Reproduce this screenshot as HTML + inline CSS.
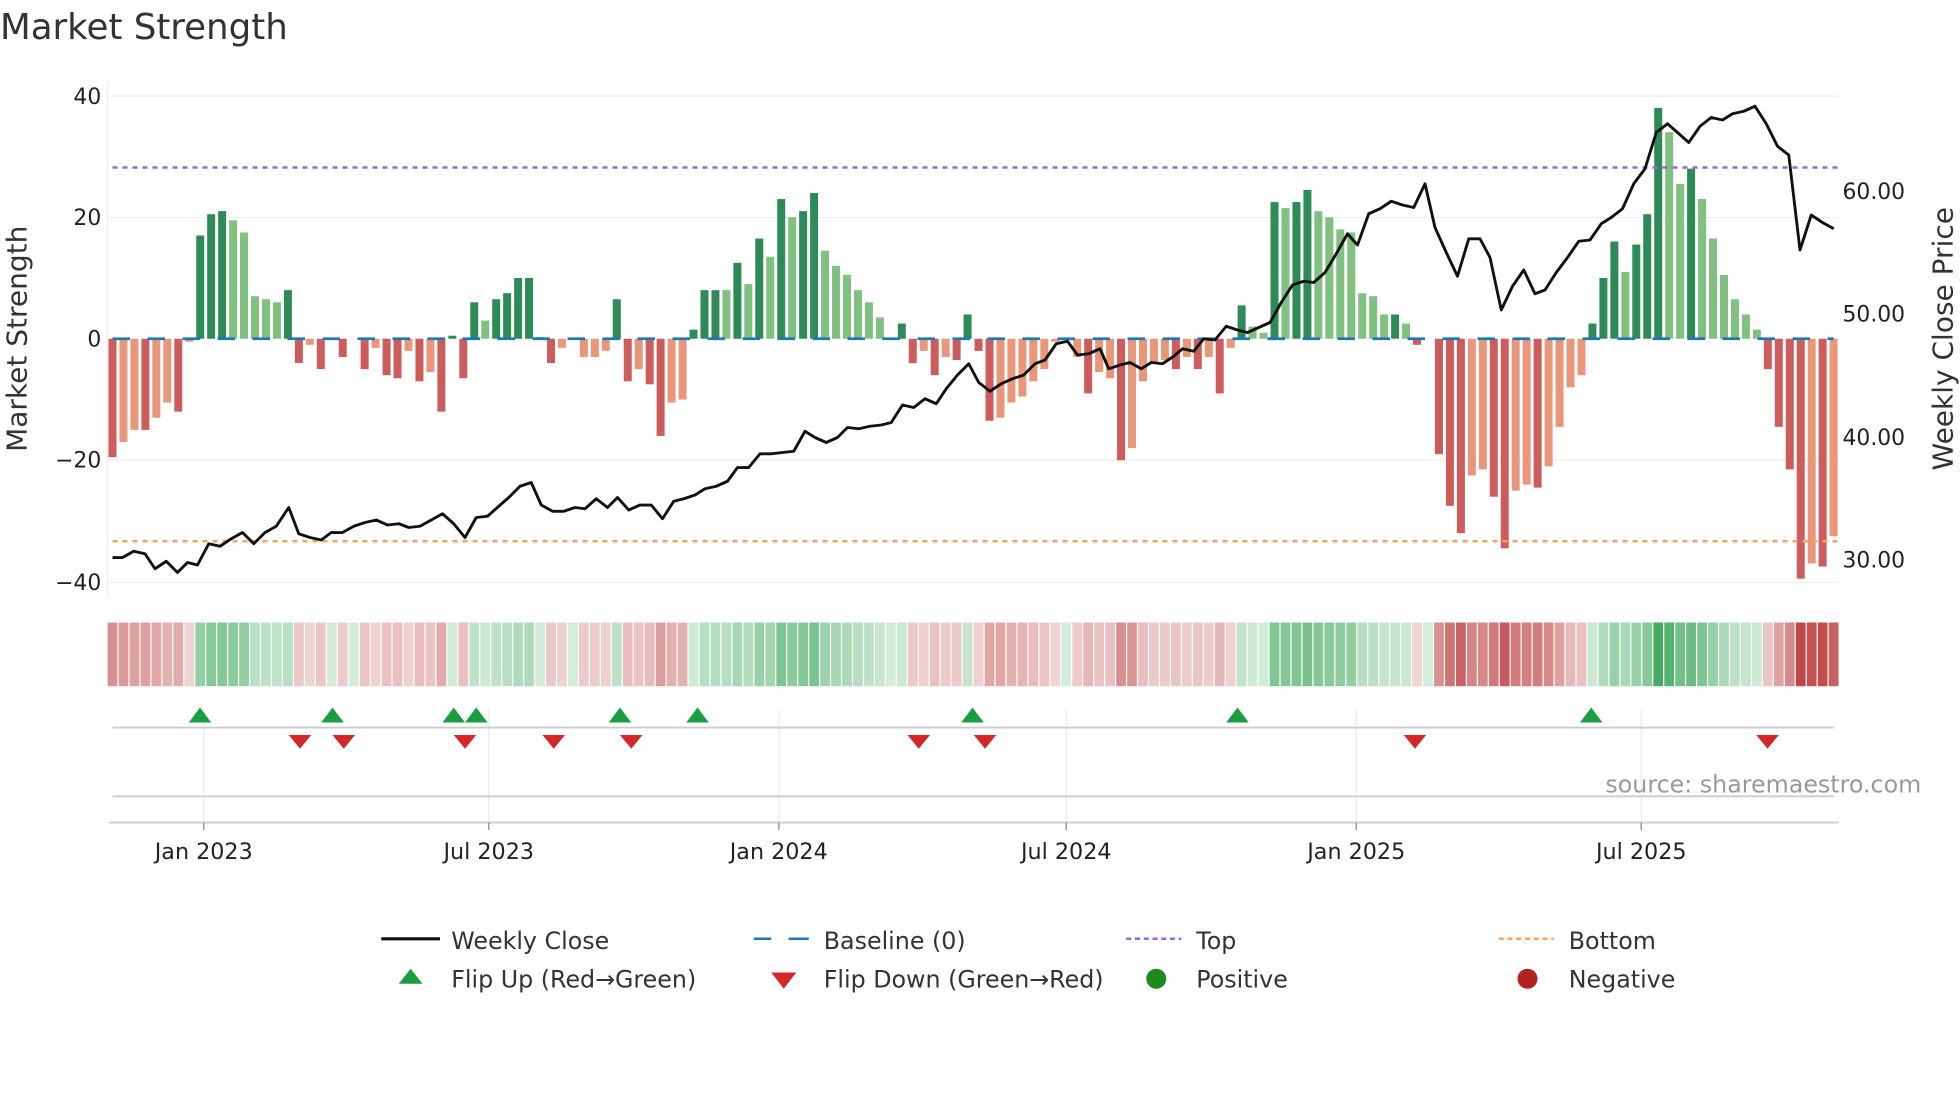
<!DOCTYPE html>
<html><head><meta charset="utf-8"><style>
html,body{margin:0;padding:0;background:#fff;width:1960px;height:1102px;overflow:hidden}
svg{display:block;font-family:"DejaVu Sans","Liberation Sans",sans-serif}
</style></head><body>
<svg id="s" width="1960" height="1102" viewBox="0 0 1568 881.6" xmlns="http://www.w3.org/2000/svg">
<text x="0" y="31" font-size="28.5" fill="#333">Market Strength</text>
<g stroke="#eee" stroke-width="1">
<line x1="87" y1="77" x2="1471" y2="77"/><line x1="87" y1="174" x2="1471" y2="174"/>
<line x1="87" y1="368" x2="1471" y2="368"/><line x1="87" y1="466" x2="1471" y2="466"/>
<line x1="86" y1="65" x2="86" y2="478"/>
</g>
<g font-size="17.5" fill="#222" text-anchor="end">
<text x="81" y="83">40</text><text x="81" y="180">20</text><text x="81" y="277">0</text>
<text x="81" y="374">−20</text><text x="81" y="472">−40</text>
</g>
<g font-size="17.5" fill="#222">
<text x="1474" y="159">60.00</text><text x="1474" y="257">50.00</text>
<text x="1474" y="356">40.00</text><text x="1474" y="454">30.00</text>
</g>
<text transform="translate(21,271) rotate(-90)" font-size="22.4" fill="#333" text-anchor="middle">Market Strength</text>
<text transform="translate(1562,271) rotate(-90)" font-size="22.4" fill="#333" text-anchor="middle">Weekly Close Price</text>
<g id="bars"></g>
<line x1="90" y1="271" x2="1467" y2="271" stroke="#1f77b4" stroke-width="2.2" stroke-dasharray="14,14"/>
<line x1="90" y1="134" x2="1471" y2="134" stroke="#9467dd" stroke-width="2" stroke-dasharray="4,4"/>
<line x1="90" y1="433" x2="1471" y2="433" stroke="#f4a460" stroke-width="2" stroke-dasharray="4,4"/>
<polyline id="price" fill="none" stroke="#111" stroke-width="2.3" stroke-linejoin="round"/>
<g id="strip"></g>
<g stroke="#e6edf2" stroke-width="1">
<line x1="163" y1="567" x2="163" y2="658"/><line x1="391" y1="567" x2="391" y2="658"/>
<line x1="623" y1="567" x2="623" y2="658"/><line x1="853" y1="567" x2="853" y2="658"/>
<line x1="1085" y1="567" x2="1085" y2="658"/><line x1="1313" y1="567" x2="1313" y2="658"/>
</g>
<line x1="90" y1="582" x2="1467" y2="582" stroke="#ccc" stroke-width="1.5"/>
<line x1="90" y1="637" x2="1467" y2="637" stroke="#ccc" stroke-width="1.5"/>
<line x1="87" y1="658" x2="1471" y2="658" stroke="#ccc" stroke-width="1.5"/>
<g stroke="#999" stroke-width="1.2">
<line x1="163" y1="658" x2="163" y2="664"/><line x1="391" y1="658" x2="391" y2="664"/>
<line x1="623" y1="658" x2="623" y2="664"/><line x1="853" y1="658" x2="853" y2="664"/>
<line x1="1085" y1="658" x2="1085" y2="664"/><line x1="1313" y1="658" x2="1313" y2="664"/>
</g>
<g id="flips"></g>
<text x="1537" y="634" font-size="19" fill="#999" text-anchor="end">source: sharemaestro.com</text>
<g font-size="17.8" fill="#222" text-anchor="middle">
<text x="163" y="687">Jan 2023</text><text x="391" y="687">Jul 2023</text>
<text x="623" y="687">Jan 2024</text><text x="853" y="687">Jul 2024</text>
<text x="1085" y="687">Jan 2025</text><text x="1313" y="687">Jul 2025</text>
</g>
<g font-size="19" fill="#333">
<line x1="305" y1="751" x2="352" y2="751" stroke="#111" stroke-width="2.5"/>
<text x="361" y="759">Weekly Close</text>
<line x1="603" y1="751" x2="647" y2="751" stroke="#1f77b4" stroke-width="2" stroke-dasharray="14,14"/>
<line x1="631" y1="751" x2="647" y2="751" stroke="#1f77b4" stroke-width="2"/>
<text x="659" y="759">Baseline (0)</text>
<line x1="901" y1="751" x2="945" y2="751" stroke="#9467dd" stroke-width="2" stroke-dasharray="4,3"/>
<text x="957" y="759">Top</text>
<line x1="1199" y1="751" x2="1243" y2="751" stroke="#f4a460" stroke-width="2" stroke-dasharray="4,3"/>
<text x="1255" y="759">Bottom</text>
<polygon points="319,787 338,787 328.5,775" fill="#1a9e3f"/>
<text x="361" y="790">Flip Up (Red→Green)</text>
<polygon points="617,778 637,778 627,791" fill="#d62728"/>
<text x="659" y="790">Flip Down (Green→Red)</text>
<circle cx="925" cy="783" r="8" fill="#1e8a1e"/>
<text x="957" y="790">Positive</text>
<circle cx="1222" cy="783" r="8" fill="#b22222"/>
<text x="1255" y="790">Negative</text>
</g>
</svg>
<script>
var V=[-19.5,-17,-15,-15,-13,-10.5,-12,-0.5,17,20.5,21,19.5,17.5,7,6.5,6,8,-4,-1,-5,0.2,-3,0,-5,-1.5,-6,-6.5,-2,-7,-5.5,-12,0.5,-6.5,6,3,6.5,7.5,10,10,0.3,-4,-1.5,0,-3,-3,-2,6.5,-7,-5,-7.5,-16,-10.5,-10,1.5,8,8,8,12.5,9,16.5,13.5,23,20,21,24,14.5,12,10.5,8,6,3.5,0,2.5,-4,-2,-6,-3,-3.5,4,-2,-13.5,-13,-10.5,-9.5,-7,-5,-0.5,0,-3,-9,-5.5,-6.5,-20,-18,-7,-4,-3.5,-5,-3,-5,-3,-9,-1.5,5.5,2,1,22.5,21.5,22.5,24.5,21,20,18,17.5,7.5,7,4,4,2.5,-1,0,-19,-27.5,-32,-22.5,-21.5,-26,-34.5,-25,-24,-24.5,-21,-14.5,-8,-6,2.5,10,16,11,15.5,20.5,38,34,25.5,28,23,16.5,10.5,6.5,4,1.5,-5,-14.5,-21.5,-39.5,-37,-37.5,-32.5];
var D=[1,0,0,1,0,0,1,0,1,1,1,0,0,0,0,0,1,1,0,1,0,1,0,1,0,1,1,0,1,0,1,1,1,1,0,1,1,1,1,0,1,0,0,0,0,0,1,1,0,1,1,0,0,1,1,1,0,1,0,1,0,1,0,1,1,0,0,0,0,0,0,0,1,1,0,1,0,1,1,1,1,0,0,0,0,0,0,0,0,1,0,0,1,0,0,0,0,1,0,1,0,1,0,1,0,0,1,0,1,1,0,0,0,0,0,0,0,1,0,1,0,1,1,1,0,0,1,1,0,0,1,0,0,0,0,1,1,1,0,1,1,1,0,0,1,0,0,0,0,0,0,1,1,1,1,0,1,0];
var ns="http://www.w3.org/2000/svg",b=document.getElementById('bars'),st=document.getElementById('strip');
function el(t,a,p){var e=document.createElementNS(ns,t);for(var k in a)e.setAttribute(k,a[k]);p.appendChild(e);return e}
var u=4.86;
for(var i=0;i<V.length;i++){var x=90+8.77*i,v=V[i];var h=Math.abs(v)*u,y=v>=0?271-h:271;
var c=v>=0?(D[i]?'#2e8b57':'#80c080'):(D[i]?'#cd5c5c':'#e9967a');
if(h>0.3)el('rect',{x:x-3.2,y:y,width:6.4,height:h,fill:c},b);
var a=Math.min(1,0.22+0.78*Math.abs(v)/40);
var col=v>=0?'rgba(60,168,90,'+a+')':'rgba(192,70,70,'+a+')';
el('rect',{x:x-3.9,y:498,width:7.8,height:51,fill:col},st);}
var P=[[90,446],[98,446],[107,441],[116,443],[124,455],[133,449],[142,458],[150,450],[158,452],[167,435],[176,437],[185,431],[194,426],[203,435],[212,426],[221,421],[231,406],[239,427],[248,430],[257,432],[265,426],[274,426],[283,421],[292,418],[301,416],[310,420],[319,419],[327,422],[336,421],[345,416],[354,411],[363,419],[372,430],[381,414],[390,413],[399,405],[407,398],[416,389],[425,386],[433,404],[442,409],[451,409],[460,406],[468,407],[477,399],[486,406],[494,398],[503,408],[512,404],[521,404],[530,415],[539,401],[547,399],[556,396],[564,391],[573,389],[582,385],[590,374],[599,374],[608,363],[617,363],[626,362],[635,361],[644,345],[652,350],[661,354],[670,350],[678,342],[687,343],[696,341],[705,340],[713,338],[722,324],[731,326],[740,319],[749,323],[757,311],[766,300],[775,291],[783,306],[792,313],[801,307],[810,303],[819,300],[828,291],[836,288],[845,275],[854,273],[862,284],[871,283],[880,279],[887,295],[896,292],[904,290],[913,295],[921,290],[930,291],[939,285],[946,279],[955,281],[963,271],[972,272],[981,261],[990,264],[998,266],[1007,262],[1016,258],[1025,242],[1034,228],[1043,225],[1051,226],[1060,218],[1069,203],[1078,187],[1086,196],[1095,171],[1104,167],[1113,161],[1122,164],[1131,166],[1140,147],[1148,182],[1157,202],[1166,221],[1175,191],[1184,191],[1192,206],[1201,248],[1210,229],[1219,216],[1228,235],[1236,232],[1245,218],[1254,206],[1263,193],[1272,192],[1281,179],[1289,174],[1298,167],[1307,147],[1316,135],[1325,106],[1334,99],[1342,106],[1351,114],[1360,101],[1369,94],[1378,96],[1386,91],[1395,89],[1404,85],[1413,99],[1422,117],[1431,124],[1440,200],[1449,172],[1458,178],[1467,183]];
document.getElementById('price').setAttribute('points',P.map(function(p){return p.join(',')}).join(' '));
var f=document.getElementById('flips');
[160,266,363,381,496,558,778,990,1273].forEach(function(x){el('polygon',{points:(x-9)+',578 '+(x+9)+',578 '+x+',566',fill:'#1a9e3f'},f)});
[240,275,372,443,505,735,788,1132,1414].forEach(function(x){el('polygon',{points:(x-9)+',588 '+(x+9)+',588 '+x+',599',fill:'#d62728'},f)});
</script>
</body></html>
